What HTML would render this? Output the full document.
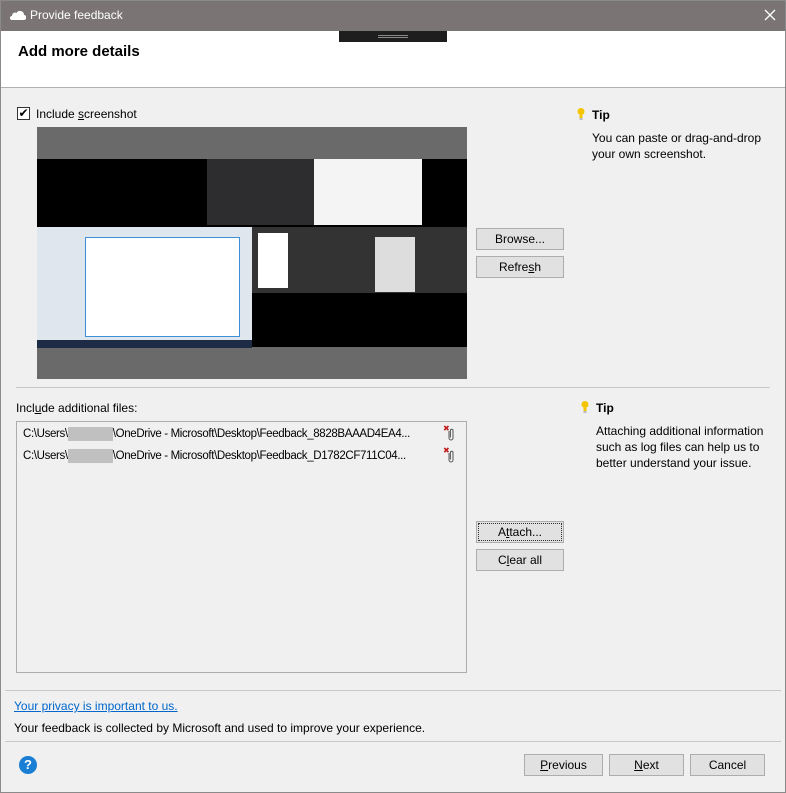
<!DOCTYPE html>
<html><head><style>
*{margin:0;padding:0;box-sizing:border-box}
body{width:786px;height:793px;background:#f0f0f0;font-family:"Liberation Sans",sans-serif;font-size:12px;color:#000;position:relative;overflow:hidden}
.a{position:absolute}
.btn{position:absolute;background:#e1e1e1;border:1px solid #adadad;text-align:center;line-height:20px;font-size:12px}
.hr{position:absolute;height:1px;background:#c8c8c8}
.bulb{position:absolute;width:8px;height:14px}
</style></head><body>
<div class="a" style="left:0;top:0;width:786px;height:793px;border:1px solid #8a8a8a;z-index:5"></div>
<div class="a" style="left:0;top:0;width:786px;height:31px;background:#7a7574"></div>
<svg class="a" style="left:9px;top:9px" width="17" height="12" viewBox="0 0 17 12"><path d="M3 11h12a2.5 2.5 0 0 0 0-5a4 4 0 0 0-7.5-2A3 3 0 0 0 3 7a2 2 0 0 0 0 4z" fill="#fff"/></svg>
<div class="a" style="left:30px;top:8px;color:#fff;font-size:12px">Provide feedback</div>
<svg class="a" style="left:764px;top:9px" width="12" height="12"><path d="M1 1L11 11M11 1L1 11" stroke="#fff" stroke-width="1.3"/></svg>
<div class="a" style="left:1px;top:31px;width:784px;height:57px;background:#fff;border-bottom:1px solid #b0b0b0"></div>
<div class="a" style="left:339px;top:31px;width:108px;height:11px;background:#1e1e1e"></div>
<div class="a" style="left:378px;top:35px;width:30px;height:3px;border-top:1px solid #888;border-bottom:1px solid #888"></div>
<div class="a" style="left:18px;top:43px;font-size:15px;font-weight:bold">Add more details</div>
<div class="a" style="left:17px;top:107px;width:13px;height:13px;border:1px solid #333;background:#fff;font-size:12px;line-height:11px;text-align:center">✔</div>
<div class="a" style="left:36px;top:107px">Include <u>s</u>creenshot</div>
<div class="a" style="left:37px;top:127px;width:430px;height:252px;background:#6a6a6a"></div>
<div class="a" style="left:37px;top:159px;width:430px;height:188px;background:#000"></div>
<div class="a" style="left:207px;top:159px;width:107px;height:66px;background:#2d2d30"></div>
<div class="a" style="left:314px;top:159px;width:108px;height:66px;background:#f4f4f4"></div>
<div class="a" style="left:37px;top:227px;width:215px;height:120px;background:#dfe6ee"></div>
<div class="a" style="left:85px;top:237px;width:155px;height:100px;background:#fff;border:1px solid #3a8fd8"></div>
<div class="a" style="left:37px;top:340px;width:215px;height:8px;background:#1d2b44"></div>
<div class="a" style="left:252px;top:227px;width:215px;height:66px;background:#333"></div>
<div class="a" style="left:258px;top:233px;width:30px;height:55px;background:#fff"></div>
<div class="a" style="left:375px;top:237px;width:40px;height:55px;background:#ddd"></div>
<div class="btn" style="left:476px;top:228px;width:88px;height:22px">Browse...</div>
<div class="btn" style="left:476px;top:256px;width:88px;height:22px">Refre<u>s</u>h</div>
<svg class="bulb" style="left:577px;top:107px" viewBox="0 0 8 14"><circle cx="4" cy="4.5" r="3.5" fill="#f5c400"/><rect x="2.5" y="8" width="3" height="3" fill="#f5c400"/><rect x="2.5" y="11.5" width="3" height="1" fill="#888"/></svg>
<div class="a" style="left:592px;top:108px;font-weight:bold">Tip</div>
<div class="a" style="left:592px;top:130px;line-height:16px">You can paste or drag-and-drop<br>your own screenshot.</div>
<div class="hr" style="left:16px;top:387px;width:754px"></div>
<div class="a" style="left:16px;top:401px">Incl<u>u</u>de additional files:</div>
<div class="a" style="left:16px;top:421px;width:451px;height:252px;border:1px solid #adadad;background:#f0f0f0"></div>
<div class="a" style="left:23px;top:427px;white-space:nowrap;font-size:11.5px;letter-spacing:-0.35px">C:\Users\<span style="display:inline-block;width:45px;height:14px;background:#c0c0c0;vertical-align:middle"></span>\OneDrive - Microsoft\Desktop\Feedback_8828BAAAD4EA4...</div>
<div class="a" style="left:23px;top:449px;white-space:nowrap;font-size:11.5px;letter-spacing:-0.35px">C:\Users\<span style="display:inline-block;width:45px;height:14px;background:#c0c0c0;vertical-align:middle"></span>\OneDrive - Microsoft\Desktop\Feedback_D1782CF711C04...</div>
<div class="a" style="left:443px;top:424px;color:#c02020;font-size:8px">✖</div>
<div class="a" style="left:443px;top:446px;color:#c02020;font-size:8px">✖</div>
<svg class="a" style="left:447px;top:428px" width="8" height="13" viewBox="0 0 8 13"><path d="M2 3v7a2 2 0 0 0 4 0V2.5a1.3 1.3 0 0 0-2.6 0V9.5" fill="none" stroke="#555" stroke-width="1"/></svg>
<svg class="a" style="left:447px;top:450px" width="8" height="13" viewBox="0 0 8 13"><path d="M2 3v7a2 2 0 0 0 4 0V2.5a1.3 1.3 0 0 0-2.6 0V9.5" fill="none" stroke="#555" stroke-width="1"/></svg>
<div class="btn" style="left:476px;top:521px;width:88px;height:22px;outline:1px dotted #333;outline-offset:-3px">A<u>t</u>tach...</div>
<div class="btn" style="left:476px;top:549px;width:88px;height:22px">C<u>l</u>ear all</div>
<svg class="bulb" style="left:581px;top:400px" viewBox="0 0 8 14"><circle cx="4" cy="4.5" r="3.5" fill="#f5c400"/><rect x="2.5" y="8" width="3" height="3" fill="#f5c400"/><rect x="2.5" y="11.5" width="3" height="1" fill="#888"/></svg>
<div class="a" style="left:596px;top:401px;font-weight:bold">Tip</div>
<div class="a" style="left:596px;top:423px;line-height:16px">Attaching additional information<br>such as log files can help us to<br>better understand your issue.</div>
<div class="hr" style="left:5px;top:690px;width:776px"></div>
<div class="a" style="left:14px;top:699px;color:#0066cc;text-decoration:underline">Your privacy is important to us.</div>
<div class="a" style="left:14px;top:721px">Your feedback is collected by Microsoft and used to improve your experience.</div>
<div class="hr" style="left:5px;top:741px;width:776px"></div>
<div class="a" style="left:19px;top:756px;width:18px;height:18px;border-radius:50%;background:#1a7fd4;color:#fff;font-weight:bold;text-align:center;line-height:18px;font-size:13px">?</div>
<div class="btn" style="left:524px;top:754px;width:79px;height:22px"><u>P</u>revious</div>
<div class="btn" style="left:609px;top:754px;width:75px;height:22px"><u>N</u>ext</div>
<div class="btn" style="left:690px;top:754px;width:75px;height:22px">Cancel</div>
</body></html>
